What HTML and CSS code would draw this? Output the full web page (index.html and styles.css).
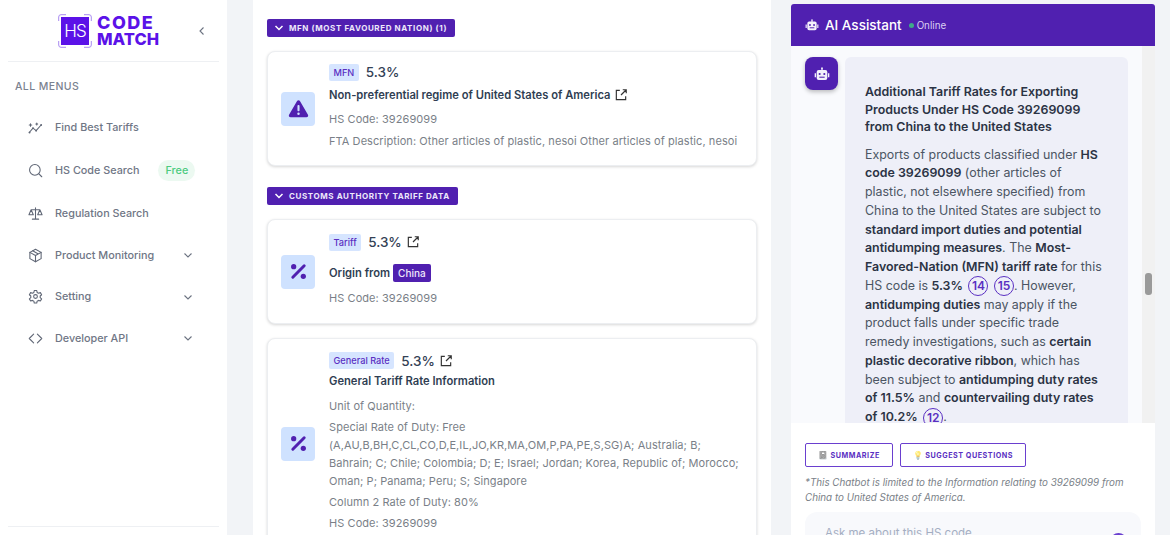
FILE: index.html
```html
<!DOCTYPE html>
<html lang="en">
<head>
  <meta charset="UTF-8">
  <title>HS Code Match</title>
  <link rel="stylesheet" href="styles.css">
</head>
<body>
  <div class="page">

    <!-- Sidebar -->
    <aside class="sidebar">
      <div class="brand">
        <div class="logo">
          <div class="logo-mark">
            <svg class="logo-frame" viewBox="0 0 34 34"><path d="M.7 7V3A2.300 2.300 0 0 1 3 .7h5M26 .7h5A2.300 2.300 0 0 1 33.300 3v4M33.300 27v4a2.300 2.300 0 0 1-2.300 2.300h-5M8 33.300H3A2.300 2.300 0 0 1 .7 31v-4"/></svg>
            <span>HS</span>
          </div>
          <div class="logo-text"><div class="logo-code">CODE</div><div>MATCH</div></div>
        </div>
        <svg class="collapse" viewBox="0 0 24 24"><path d="M15 5l-7 7 7 7"/></svg>
      </div>
      <div class="menu-title">ALL MENUS</div>
      <nav class="menu">
        <div class="menu-item menu-first">
          <svg class="menu-icon" viewBox="0 0 24 24"><path d="M2 20l6-7 5 4 8-9"/><circle class="dot-fill" cx="8" cy="13" r="1.500"/><circle class="dot-fill" cx="13" cy="17" r="1.500"/><circle class="dot-fill" cx="2.500" cy="20" r="1.500"/><circle class="dot-fill" cx="21" cy="8" r="1.500"/><path d="M4 6v4M2 8h4M14 5v3M12.500 6.500h3"/></svg>
          <span>Find Best Tariffs</span>
        </div>
        <div class="menu-item menu-search">
          <svg class="menu-icon" viewBox="0 0 24 24"><circle cx="11" cy="11" r="8.500"/><path d="M17.500 17.500l4.500 4.500"/></svg>
          <span>HS Code Search</span>
          <span class="free">Free</span>
        </div>
        <div class="menu-item menu-reg">
          <svg class="menu-icon" viewBox="0 0 24 24"><path d="M12 3v17M7 21h10M5 6h14M5 6l-3.500 8h7zM19 6l-3.500 8h7z"/></svg>
          <span>Regulation Search</span>
        </div>
        <div class="menu-item">
          <svg class="menu-icon" viewBox="0 0 24 24"><path d="M12 2l9 5v10l-9 5-9-5V7z"/><path d="M3 7l9 5 9-5M12 12v10M7.500 4.500l9 5"/></svg>
          <span>Product Monitoring</span>
          <svg class="chev" viewBox="0 0 24 24"><path d="M5 9l7 7 7-7"/></svg>
        </div>
        <div class="menu-item">
          <svg class="menu-icon" viewBox="0 0 24 24"><circle cx="12" cy="12" r="3"/><path d="M10 2.500h4l.6 3 2.300 1.300 2.900-1 2 3.400-2.300 2v2.600l2.300 2-2 3.400-2.900-1-2.300 1.300-.6 3h-4l-.6-3-2.300-1.300-2.900 1-2-3.400 2.300-2v-2.600l-2.300-2 2-3.400 2.900 1 2.300-1.300z"/></svg>
          <span>Setting</span>
          <svg class="chev" viewBox="0 0 24 24"><path d="M5 9l7 7 7-7"/></svg>
        </div>
        <div class="menu-item">
          <svg class="menu-icon" viewBox="0 0 24 24"><path d="M9 5l-7 7 7 7M15 5l7 7-7 7"/></svg>
          <span>Developer API</span>
          <svg class="chev" viewBox="0 0 24 24"><path d="M5 9l7 7 7-7"/></svg>
        </div>
      </nav>
      <div class="sidebar-foot"></div>
    </aside>

    <!-- Results -->
    <main class="results">
      <div class="chip">
        <svg class="chip-chev" viewBox="0 0 24 24"><path d="M5 8l7 7 7-7"/></svg>
        MFN (MOST FAVOURED NATION) (1)
      </div>
      <div class="card card-mfn">
        <div class="card-icon">
          <svg viewBox="0 0 24 24"><path d="M12 2.500c.8 0 1.400.4 1.800 1.100l9 15.600c.8 1.400-.2 2.800-1.800 2.800H3c-1.600 0-2.600-1.400-1.800-2.800l9-15.600c.4-.7 1-1.100 1.800-1.100z"/><rect class="cut" x="10.800" y="8" width="2.400" height="7" rx="1"/><circle class="cut" cx="12" cy="18" r="1.400"/></svg>
        </div>
        <div class="card-body">
          <div class="rate-row"><span class="tag">MFN</span><span class="rate">5.3%</span></div>
          <div class="card-title">Non-preferential regime of United States of America <svg class="ext" viewBox="0 0 24 24"><path d="M10 4H4v16h16v-6M12 12l9-9M15 3h6v6"/></svg></div>
          <p class="line line-first">HS Code: 39269099</p>
          <p class="line line-gap">FTA Description: Other articles of plastic, nesoi Other articles of plastic, nesoi</p>
        </div>
      </div>

      <div class="chip chip-second">
        <svg class="chip-chev" viewBox="0 0 24 24"><path d="M5 8l7 7 7-7"/></svg>
        CUSTOMS AUTHORITY TARIFF DATA
      </div>
      <div class="card card-tariff">
        <div class="card-icon">
          <svg viewBox="0 0 24 24"><path class="pct" d="M18.500 5.500l-13 13"/><circle cx="6.500" cy="6.500" r="3"/><circle cx="17.500" cy="17.500" r="3"/></svg>
        </div>
        <div class="card-body">
          <div class="rate-row"><span class="tag">Tariff</span><span class="rate">5.3%</span><svg class="ext" viewBox="0 0 24 24"><path d="M10 4H4v16h16v-6M12 12l9-9M15 3h6v6"/></svg></div>
          <div class="card-title origin">Origin from <span class="country">China</span></div>
          <p class="line line-first">HS Code: 39269099</p>
        </div>
      </div>

      <div class="card card-general">
        <div class="card-icon">
          <svg viewBox="0 0 24 24"><path class="pct" d="M18.500 5.500l-13 13"/><circle cx="6.500" cy="6.500" r="3"/><circle cx="17.500" cy="17.500" r="3"/></svg>
        </div>
        <div class="card-body">
          <div class="rate-row"><span class="tag">General Rate</span><span class="rate">5.3%</span><svg class="ext" viewBox="0 0 24 24"><path d="M10 4H4v16h16v-6M12 12l9-9M15 3h6v6"/></svg></div>
          <div class="card-title title-tight">General Tariff Rate Information</div>
          <p class="line line-first">Unit of Quantity:</p>
          <p class="line line-tight">Special Rate of Duty: Free (A,AU,B,BH,C,CL,CO,D,E,IL,JO,KR,MA,OM,P,PA,PE,S,SG)A; Australia; B; Bahrain; C; Chile; Colombia; D; E; Israel; Jordan; Korea, Republic of; Morocco; Oman; P; Panama; Peru; S; Singapore</p>
          <p class="line line-tight">Column 2 Rate of Duty: 80%</p>
          <p class="line line-tight">HS Code: 39269099</p>
        </div>
      </div>
    </main>

    <!-- Chat -->
    <section class="chat">
      <header class="chat-head">
        <svg class="bot" viewBox="0 0 24 24"><path d="M12 2a1.500 1.500 0 0 1 1 2.600V6h4a3 3 0 0 1 3 3v9a3 3 0 0 1-3 3H7a3 3 0 0 1-3-3V9a3 3 0 0 1 3-3h4V4.600A1.500 1.500 0 0 1 12 2zM1 11h2v6H1zM21 11h2v6h-2z"/><circle class="bot-eye" cx="8.500" cy="12" r="1.600"/><circle class="bot-eye" cx="15.500" cy="12" r="1.600"/><rect class="bot-eye" x="8" y="16" width="8" height="1.600"/></svg>
        <span class="chat-title">AI Assistant</span>
        <span class="dot"></span>
        <span class="online">Online</span>
      </header>
      <div class="chat-scroll">
        <div class="messages">
          <div class="avatar">
            <svg class="bot bot-small" viewBox="0 0 24 24"><path d="M12 2a1.500 1.500 0 0 1 1 2.600V6h4a3 3 0 0 1 3 3v9a3 3 0 0 1-3 3H7a3 3 0 0 1-3-3V9a3 3 0 0 1 3-3h4V4.600A1.500 1.500 0 0 1 12 2zM1 11h2v6H1zM21 11h2v6h-2z"/><circle class="bot-eye" cx="8.500" cy="12" r="1.600"/><circle class="bot-eye" cx="15.500" cy="12" r="1.600"/><rect class="bot-eye" x="8" y="16" width="8" height="1.600"/></svg>
          </div>
          <div class="bubble">
            <h3>Additional Tariff Rates for Exporting Products Under HS Code 39269099 from China to the United States</h3>
            <p>Exports of products classified under <b>HS code 39269099</b> (other articles of plastic, not elsewhere specified) from China to the United States are subject to <b>standard import duties and potential antidumping measures</b>. The <b>Most-Favored-Nation (MFN) tariff rate</b> for this HS code is <b>5.3%</b> <span class="cite">14</span> <span class="cite">15</span>. However, <b>antidumping duties</b> may apply if the product falls under specific trade remedy investigations, such as <b>certain plastic decorative ribbon</b>, which has been subject to <b>antidumping duty rates of 11.5%</b> and <b>countervailing duty rates of 10.2%</b> <span class="cite">12</span>.</p>
          </div>
        </div>
        <div class="scrollbar"><div class="thumb"></div></div>
      </div>
      <div class="chat-foot">
        <div class="actions">
          <button><span class="emoji">📓</span>SUMMARIZE</button>
          <button><span class="emoji">💡</span>SUGGEST QUESTIONS</button>
        </div>
        <p class="note">*This Chatbot is limited to the Information relating to 39269099 from China to United States of America.</p>
        <div class="ask">
          <span>Ask me about this HS code</span>
          <span class="send"></span>
        </div>
      </div>
    </section>
  </div>
</body>
</html>
```

FILE: styles.css
```css
* {
  box-sizing: border-box;
}

html, body {
  margin: 0;
  height: 535px;
  overflow: hidden;
}

body {
  font-family: Inter, "Liberation Sans", sans-serif;
  background: #f2f4f7;
  color: #6b7280;
}

p {
  margin: 0;
}

svg {
  display: block;
  flex-shrink: 0;
}

.page {
  display: flex;
  height: 535px;
}

/* Sidebar */
.sidebar {
  width: 227px;
  flex-shrink: 0;
  background: #fff;
  padding: 0 8px;
  display: flex;
  flex-direction: column;
}

.brand {
  height: 62px;
  display: flex;
  align-items: center;
  padding-left: 50px;
  border-bottom: 1px solid #eef0f3;
}

.logo {
  display: flex;
  align-items: center;
  gap: 5px;
}

.logo-mark {
  position: relative;
  width: 34px;
  height: 34px;
  padding: 3px;
}

.logo-frame {
  position: absolute;
  inset: 0;
  width: 34px;
  height: 34px;
  fill: none;
  stroke: #a98bf0;
  stroke-width: 1;
}

.logo-mark span {
  display: block;
  height: 100%;
  background: #5b12e8;
  color: #fff;
  font-size: 17px;
  line-height: 28px;
  font-weight: 300;
  text-align: center;
  letter-spacing: -1px;
}

.logo-text {
  width: 61px;
  font-size: 16.500px;
  line-height: 17px;
  font-weight: 800;
  color: #5b12e8;
}

.logo-code {
  font-size: 18px;
  letter-spacing: 1.500px;
}

.collapse {
  width: 12px;
  height: 12px;
  margin-left: 38px;
  fill: none;
  stroke: #6b7280;
  stroke-width: 2.200;
}

.menu-title {
  margin: 18px 0 0 7px;
  font-size: 10.500px;
  line-height: 13px;
  font-weight: 500;
  letter-spacing: .4px;
  color: #7b8290;
}

.menu {
  display: flex;
  flex-direction: column;
  padding: 0 26px 0 20px;
  flex: 1;
}

.menu-item {
  height: 41.500px;
  display: flex;
  align-items: center;
  gap: 12px;
  font-size: 10.800px;
  font-weight: 500;
  color: #6f7685;
  white-space: nowrap;
}

.menu-first {
  margin-top: 12.500px;
  height: 43px;
}

.menu-search {
  height: 44px;
}

.menu-reg {
  height: 42px;
}

.menu-icon {
  width: 15px;
  height: 15px;
  fill: none;
  stroke: #5f6675;
  stroke-width: 1.700;
  stroke-linejoin: round;
  stroke-linecap: round;
}

.dot-fill {
  fill: #5f6675;
  stroke: none;
}

.free {
  margin-left: 7px;
  padding: 0 7px;
  height: 21px;
  line-height: 21px;
  border-radius: 11px;
  background: #ecf9f1;
  color: #4ccb7f;
}

.chev {
  width: 12px;
  height: 12px;
  margin: 0 -.500px 0 auto;
  fill: none;
  stroke: #6b7280;
  stroke-width: 2.200;
}

.sidebar-foot {
  height: 9px;
  border-top: 1px solid #eef0f3;
}

/* Results */
.results {
  width: 518px;
  height: 535px;
  flex-shrink: 0;
  margin-left: 26px;
  padding: 19px 14px 0;
  background: #fff;
  overflow: hidden;
}

.chip {
  display: flex;
  width: fit-content;
  align-items: center;
  gap: 4.500px;
  height: 18px;
  padding: 0 8px 0 5.500px;
  border-radius: 2px;
  background: #5020b0;
  color: #eee8fb;
  font-size: 8px;
  font-weight: 700;
  letter-spacing: .6px;
}

.chip-second {
  margin-top: 21px;
}

.chip-chev {
  width: 12px;
  height: 12px;
  fill: none;
  stroke: #fff;
  stroke-width: 3;
}

.card {
  display: flex;
  align-items: center;
  gap: 14px;
  margin-top: 14px;
  padding: 0 13px;
  background: #fff;
  border: 1px solid #eceef1;
  border-radius: 8px;
  box-shadow: 0 1px 3px rgba(0, 0, 0, .16);
}

.card-mfn {
  height: 115px;
}

.card-tariff {
  height: 105px;
}

.card-general {
  height: 211px;
}

.card-icon {
  width: 34px;
  height: 34px;
  flex-shrink: 0;
  border-radius: 4px;
  background: #cfe2ff;
  display: flex;
  align-items: center;
  justify-content: center;
}

.card-icon svg {
  width: 21px;
  height: 21px;
  fill: #5020b0;
}

.cut {
  fill: #cfe2ff;
}

.pct {
  fill: none;
  stroke: #5020b0;
  stroke-width: 3.400;
  stroke-linecap: round;
}

.card-body {
  flex: 1;
  min-width: 0;
  padding-bottom: 3px;
}

.rate-row {
  display: flex;
  align-items: center;
  gap: 7px;
}

.tag {
  padding: 0 4.500px;
  height: 17px;
  line-height: 17px;
  border-radius: 2px;
  background: #d6e5ff;
  color: #5a2fc2;
  font-size: 9.200px;
  font-weight: 500;
}

.rate {
  font-size: 13.500px;
  font-weight: 500;
  color: #334155;
}

.card-title {
  display: flex;
  align-items: center;
  gap: 3px;
  margin-top: 6px;
  font-size: 11.200px;
  line-height: 17px;
  font-weight: 600;
  color: #2f3e52;
}

.title-tight {
  margin-top: 4px;
}

.origin {
  margin-top: 13.500px;
}

.country {
  padding: 0 5px;
  height: 18px;
  line-height: 18px;
  border-radius: 2px;
  background: #5020b0;
  color: #eee8fb;
  font-size: 10px;
  font-weight: 500;
}

.ext {
  width: 14px;
  height: 14px;
  fill: none;
  stroke: #333;
  stroke-width: 2;
}

.rate-row .ext {
  margin-left: -3px;
}

.line {
  font-size: 11px;
  line-height: 18px;
  color: #7a7f88;
  letter-spacing: .07px;
}

.line-first {
  margin-top: 6.500px;
}

.line-gap {
  margin-top: 4px;
}

.line-tight {
  margin-top: 3px;
}

/* Chat */
.chat {
  width: 364px;
  height: 531px;
  flex-shrink: 0;
  margin: 4px 0 0 20px;
  display: flex;
  flex-direction: column;
  background: #fff;
  border-radius: 3px 3px 0 0;
  overflow: hidden;
}

.chat-head {
  height: 42px;
  flex-shrink: 0;
  display: flex;
  align-items: center;
  padding: 0 14px;
  background: #5020b0;
  color: #fff;
}

.bot {
  width: 14px;
  height: 14px;
  fill: #f3f0fb;
}

.bot-eye {
  fill: #5020b0;
}

.chat-title {
  margin-left: 6px;
  font-size: 13.500px;
  font-weight: 500;
}

.dot {
  width: 5px;
  height: 5px;
  margin-left: 7px;
  border-radius: 50%;
  background: #3fa98a;
}

.online {
  margin-left: 3px;
  font-size: 9.800px;
  color: #d9cff2;
}

.chat-scroll {
  height: 377px;
  flex-shrink: 0;
  display: flex;
  background: #f9fafd;
  overflow: hidden;
}

.messages {
  flex: 1;
  display: flex;
  align-items: flex-start;
  gap: 7px;
  padding: 11px 14px 0;
}

.avatar {
  width: 33px;
  height: 33px;
  flex-shrink: 0;
  border-radius: 8px;
  background: #5020b0;
  box-shadow: 0 2px 4px rgba(0, 0, 0, .25);
  display: flex;
  align-items: center;
  justify-content: center;
}

.bot-small {
  width: 16px;
  height: 16px;
}

.bubble {
  flex: 1;
  min-width: 0;
  padding: 26px 23px 60px 20px;
  border-radius: 6px;
  background: #eeeff8;
  font-size: 12.400px;
  line-height: 18.750px;
  color: #4b5563;
}

.bubble h3 {
  margin: 0 0 10px;
  font-size: 12.400px;
  line-height: 17.500px;
  font-weight: 600;
  color: #2b3344;
}

.bubble b {
  font-weight: 600;
  color: #2b3344;
}

.cite {
  display: inline-block;
  width: 20px;
  height: 20px;
  margin: -2px 0 -2px 2px;
  border: 1px solid #5a2fc2;
  border-radius: 50%;
  color: #5a2fc2;
  font-size: 12px;
  line-height: 18px;
  font-weight: 600;
  text-align: center;
  vertical-align: middle;
}

.scrollbar {
  width: 13px;
  flex-shrink: 0;
  background: #f1f1f1;
  padding: 227px 3px 0;
}

.thumb {
  height: 22px;
  border-radius: 3px;
  background: #9a9a9a;
}

.chat-foot {
  flex: 1;
  padding: 20px 14px 0;
  background: #fff;
}

.actions {
  display: flex;
  gap: 7px;
}

.actions button {
  display: flex;
  align-items: center;
  height: 24px;
  padding: 0 12px;
  background: #fff;
  border: 1px solid #6a3fcf;
  border-radius: 2px;
  color: #5a2fc2;
  font-family: inherit;
  font-size: 7.200px;
  font-weight: 700;
  letter-spacing: .52px;
}

.emoji {
  margin-right: 2px;
  font-size: 8px;
  opacity: .55;
}

.note {
  margin-top: 8px;
  font-size: 9.800px;
  line-height: 15px;
  font-style: italic;
  color: #7a7f88;
}

.ask {
  display: flex;
  align-items: flex-start;
  justify-content: space-between;
  height: 60px;
  margin-top: 7px;
  padding: 14px 14px 0 20px;
  border-radius: 12px;
  background: #f8f9fc;
  color: #a4aec2;
  font-size: 11.500px;
}

.send {
  width: 17px;
  height: 17px;
  margin-top: 7px;
  border-radius: 50%;
  background: #6a3fcf;
}
```
